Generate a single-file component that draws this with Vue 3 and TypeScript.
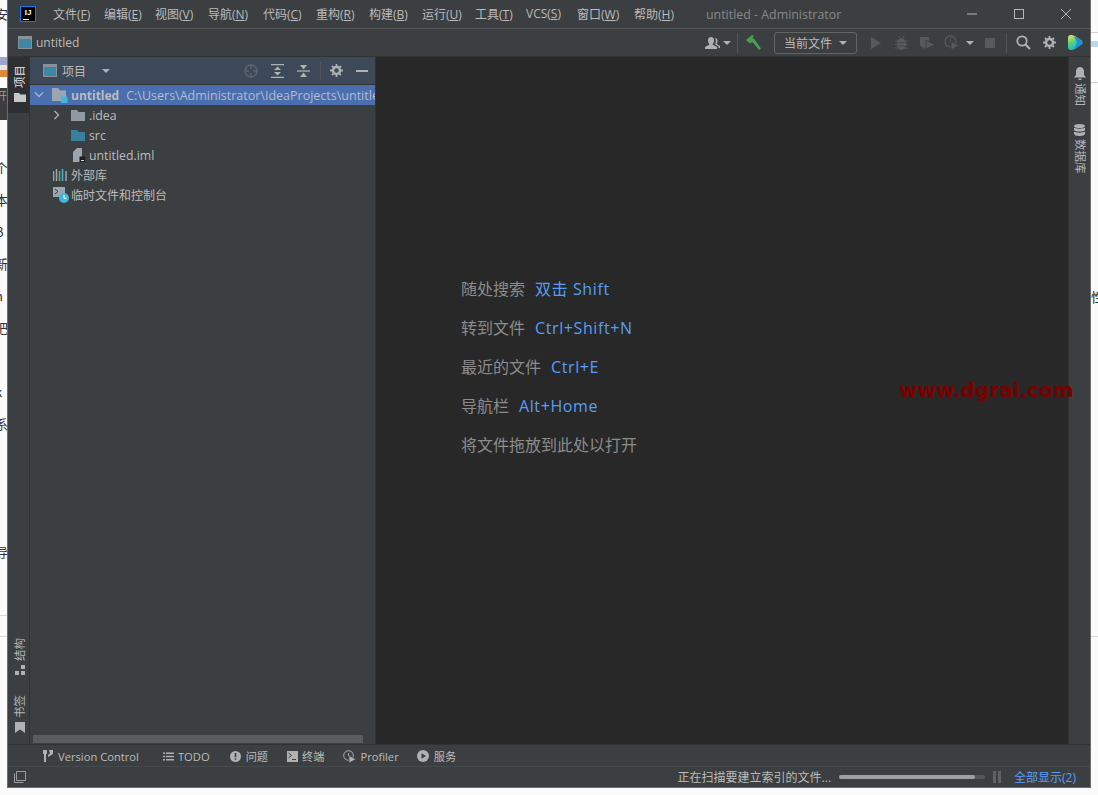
<script setup lang="ts">
// 菜单项的间距不一样，每项单独给宽度
const menus = [
  { name: '文件', key: 'F', width: 51 }, { name: '编辑', key: 'E', width: 51 }, { name: '视图', key: 'V', width: 53 },
  { name: '导航', key: 'N', width: 55 }, { name: '代码', key: 'C', width: 53 }, { name: '重构', key: 'R', width: 53 },
  { name: '构建', key: 'B', width: 53 }, { name: '运行', key: 'U', width: 53 }, { name: '工具', key: 'T', width: 51 },
  { name: 'VCS', key: 'S', width: 51 }, { name: '窗口', key: 'W', width: 57 }, { name: '帮助', key: 'H', width: 41 },
]

// 窗口后面露出来的网页文字
const leftScraps = [
  { text: '安', top: 6 }, { text: '个', top: 160 }, { text: '本', top: 192 }, { text: 'B', top: 224 },
  { text: '新', top: 256 }, { text: 'n', top: 288 }, { text: '把', top: 320 }, { text: 'k', top: 384 },
  { text: '系', top: 416 }, { text: '导', top: 544 },
]

const hints = [
  { label: '随处搜索', keys: '双击 Shift' },
  { label: '转到文件', keys: 'Ctrl+Shift+N' },
  { label: '最近的文件', keys: 'Ctrl+E' },
  { label: '导航栏', keys: 'Alt+Home' },
  { label: '将文件拖放到此处以打开', keys: '' },
]
</script>

<template>
  <div class="page">
    <div class="backdrop">
      <span
        v-for="s in leftScraps"
        :key="s.top"
        class="scrap"
        :style="{ top: s.top + 'px' }"
      >{{ s.text }}</span>
      <i class="band-img" />
      <i class="band-dark"><b>开</b></i>
      <i class="rule rule-a" />
      <i class="rule rule-b" />
      <i class="rule rule-r" />
      <i class="right-top" />
      <span class="scrap-r">性</span>
    </div>

    <div class="window">
      <!-- 标题栏 -->
      <header class="titlebar">
        <div class="logo"><span>IJ</span><i /></div>
        <nav class="menus">
          <span
            v-for="m in menus"
            :key="m.key"
            class="menu"
            :style="{ width: m.width + 'px' }"
          >{{ m.name }}(<u>{{ m.key }}</u>)</span>
        </nav>
        <span class="title">untitled - Administrator</span>
        <div class="winbtns">
          <svg width="12" height="12" viewBox="0 0 12 12"><path d="M1 6h10" stroke="#b4b6b8" /></svg>
          <svg width="12" height="12" viewBox="0 0 12 12"><rect x="1.5" y="1.5" width="9" height="9" fill="none" stroke="#b4b6b8" /></svg>
          <svg width="12" height="12" viewBox="0 0 12 12"><path d="M1 1l10 10M11 1L1 11" stroke="#b4b6b8" /></svg>
        </div>
      </header>

      <!-- 导航栏 -->
      <div class="navbar">
        <svg class="nav-icon" width="14" height="13" viewBox="0 0 14 13">
          <rect width="14" height="13" fill="#8a9097" />
          <rect x="1" y="3" width="12" height="9" fill="#3f87a6" />
        </svg>
        <span class="crumb">untitled</span>
        <div class="tools">
          <svg class="t-user" width="17" height="12" viewBox="0 0 17 12">
            <path d="M6 0c2 0 3 1.500 3 3.500S8 7 7.500 7.500L12 10v2H0v-2l4.500-2.500C4 7 3 5.500 3 3.500S4 0 6 0z" fill="#afb1b3" />
            <path d="M10 1c2 0 2.500 1.500 2.500 3S12 6.500 11.500 7l3.500 2v2h-1.500v-1.500L10 7.500c.5-1 .8-2 .8-4 0-1-.4-2-.8-2.500z" fill="#afb1b3" />
          </svg>
          <i class="caret t-caret1" />
          <i class="sep t-sep1" />
          <svg class="t-hammer" width="16" height="16" viewBox="0 0 16 16">
            <path d="M0 5l6-5 2 1-1.500 1.500L9 5l6 8.500-2 1.500L6.500 7 4 8.500z" fill="#499c54" />
          </svg>
          <div class="run-select">当前文件<i class="caret" /></div>
          <svg class="t-run" width="10" height="12" viewBox="0 0 10 12"><path d="M0 0l10 6-10 6z" fill="#565a5c" /></svg>
          <svg class="t-bug" width="13" height="14" viewBox="0 0 13 14">
            <path d="M0 5h13M0 8.500h13M0 12h13M4 0l1.500 2.500M9 0L7.500 2.500" stroke="#565a5c" />
            <ellipse cx="6.500" cy="8" rx="4.500" ry="6" fill="#565a5c" />
            <path d="M3.500 6.500h6M3.500 10h6" stroke="#3c3f41" stroke-width=".7" />
          </svg>
          <svg class="t-cover" width="15" height="14" viewBox="0 0 15 14">
            <path d="M0 1h9v5L5 13 0 9.500z" fill="#565a5c" />
            <path d="M6 4v9l9-4.500z" fill="#565a5c" stroke="#3c3f41" />
          </svg>
          <svg class="t-prof" width="15" height="15" viewBox="0 0 15 15">
            <circle cx="6.500" cy="6.500" r="5.500" fill="none" stroke="#565a5c" stroke-width="1.300" />
            <path d="M6.500 3v4h2" fill="none" stroke="#565a5c" />
            <path d="M7 6v9l8-4.500z" fill="#565a5c" stroke="#3c3f41" />
          </svg>
          <i class="caret t-caret2" />
          <i class="stop" />
          <i class="sep t-sep2" />
          <svg class="t-search" width="15" height="15" viewBox="0 0 15 15">
            <circle cx="6" cy="6" r="4.700" fill="none" stroke="#afb1b3" stroke-width="1.800" />
            <path d="M9.500 9.500L14 14" stroke="#afb1b3" stroke-width="2.200" />
          </svg>
          <svg class="t-gear" width="13" height="13" viewBox="0 0 13 13">
            <circle cx="6.500" cy="6.500" r="3.500" fill="none" stroke="#afb1b3" stroke-width="2.400" />
            <path d="M6.500 0v2.500M6.500 10.500V13M0 6.500h2.500M10.500 6.500H13M2 2l1.700 1.700M9.300 9.300L11 11M11 2L9.300 3.700M3.700 9.300L2 11" stroke="#afb1b3" stroke-width="1.800" />
          </svg>
          <svg class="t-toolbox" width="15" height="15" viewBox="0 0 15 15">
            <defs>
              <linearGradient id="tb" x1="0" y1="0" x2="0.400" y2="1">
                <stop offset="0" stop-color="#f2e34c" />
                <stop offset="0.550" stop-color="#4fd07f" />
                <stop offset="1" stop-color="#1fb6d8" />
              </linearGradient>
            </defs>
            <path d="M3 0q2 0 4 1l6.500 4.500q2 2 0 4L7 14q-2 1-4 1-3 0-3-3V3q0-3 3-3z" fill="url(#tb)" />
            <path d="M6 1l7.500 4.500q2 2 0 4L6 14l3-6.500z" fill="#1f8fe0" />
          </svg>
        </div>
      </div>

      <!-- 主体 -->
      <div class="main">
        <aside class="stripe stripe-left">
          <div class="stripe-active">
            <span class="vtext up light">项目</span>
            <svg class="stripe-folder" width="12" height="9" viewBox="0 0 12 9"><path d="M0 0h5l1.500 1.500H12V9H0z" fill="#c4c6c8" /></svg>
          </div>
          <div class="stripe-bottom">
            <span class="vtext up">结构</span>
            <svg width="10" height="10" viewBox="0 0 10 10"><path d="M6 0h4v4H6zM0 6h4v4H0zM6 6h4v4H6z" fill="#afb1b3" /></svg>
            <span class="vtext up bm-label">书签</span>
            <svg width="10" height="11" viewBox="0 0 10 11"><path d="M0 0h10v11L5 7.500 0 11z" fill="#afb1b3" /></svg>
          </div>
        </aside>

        <section class="project">
          <div class="project-head">
            <svg width="14" height="13" viewBox="0 0 14 13">
              <rect width="14" height="13" fill="#8a9097" />
              <rect x="1" y="3" width="12" height="9" fill="#3f87a6" />
            </svg>
            <span class="project-title">项目</span>
            <i class="caret head-caret" />
            <div class="head-tools">
              <svg width="14" height="14" viewBox="0 0 14 14">
                <circle cx="7" cy="7" r="6" fill="none" stroke="#5f6468" stroke-width="1.500" />
                <path d="M7 0v5M7 9v5M0 7h5M9 7h5" stroke="#5f6468" stroke-width="1.500" />
              </svg>
              <svg width="13" height="14" viewBox="0 0 13 14">
                <path d="M0 .5h13M0 13.500h13" stroke="#afb1b3" stroke-width="1.300" />
                <path d="M6.500 2.500L10 6H3zM6.500 11.500L3 8h7z" fill="#afb1b3" />
              </svg>
              <svg width="13" height="14" viewBox="0 0 13 14">
                <path d="M0 7h13" stroke="#afb1b3" stroke-width="1.300" />
                <path d="M6.500 5.500L3 1h7zM6.500 8.500L10 13H3z" fill="#afb1b3" />
              </svg>
              <i class="sep head-sep" />
              <svg width="13" height="13" viewBox="0 0 13 13">
                <circle cx="6.500" cy="6.500" r="3.500" fill="none" stroke="#afb1b3" stroke-width="2.400" />
                <path d="M6.500 0v2.500M6.500 10.500V13M0 6.500h2.500M10.500 6.500H13M2 2l1.700 1.700M9.300 9.300L11 11M11 2L9.300 3.700M3.700 9.300L2 11" stroke="#afb1b3" stroke-width="1.800" />
              </svg>
              <svg width="12" height="2" viewBox="0 0 12 2"><path d="M0 1h12" stroke="#afb1b3" stroke-width="2" /></svg>
            </div>
          </div>

          <div class="tree">
            <div class="row row-selected">
              <svg class="arrow" width="10" height="6" viewBox="0 0 10 6"><path d="M1 .5l4 4 4-4" fill="none" stroke="#aab8d0" stroke-width="1.300" /></svg>
              <svg class="ico" width="16" height="15" viewBox="0 0 16 15">
                <path d="M0 0h6l2 2.500h6V13H0z" fill="#9aa7b0" />
                <rect x="9" y="8.500" width="6.500" height="6.500" fill="#40b6e0" />
              </svg>
              <span class="name-bold">untitled</span>
              <span class="path">C:\Users\Administrator\IdeaProjects\untitled</span>
            </div>
            <div class="row lvl1">
              <svg class="arrow-right" width="6" height="10" viewBox="0 0 6 10"><path d="M.5 1l4 4-4 4" fill="none" stroke="#afb1b3" stroke-width="1.300" /></svg>
              <svg class="ico1" width="14" height="11" viewBox="0 0 14 11"><path d="M0 0h6l1.500 2H14v9H0z" fill="#8f9ba4" /></svg>
              <span>.idea</span>
            </div>
            <div class="row lvl1 no-arrow">
              <svg class="ico1" width="14" height="11" viewBox="0 0 14 11"><path d="M0 0h6l1.500 2H14v9H0z" fill="#3a7f9e" /></svg>
              <span>src</span>
            </div>
            <div class="row lvl1 no-arrow">
              <svg class="ico1 ico-iml" width="12" height="14" viewBox="0 0 12 14">
                <path d="M0 4l4-4h5v14H0z" fill="#9aa7b0" />
                <rect x="6.500" y="8.500" width="5.500" height="5.500" fill="#1c1c1c" />
                <path d="M8 12.500h3" stroke="#ddd" />
              </svg>
              <span>untitled.iml</span>
            </div>
            <div class="row lvl0">
              <svg class="ico0" width="15" height="12" viewBox="0 0 15 12">
                <path d="M.5 2v10M3.500 0v12" stroke="#9aa7b0" stroke-width="1.500" />
                <path d="M6.500 2v10" stroke="#62b543" stroke-width="1.500" />
                <path d="M9.500 0v12" stroke="#40b6e0" stroke-width="1.500" />
                <path d="M13 2v10" stroke="#9aa7b0" stroke-width="1.500" />
              </svg>
              <span>外部库</span>
            </div>
            <div class="row lvl0">
              <svg class="ico0 ico-temp" width="16" height="16" viewBox="0 0 16 16">
                <rect x="0" y="0" width="12" height="10" fill="#9aa7b0" />
                <path d="M2 2l3 2.500L2 7" fill="none" stroke="#3c3f41" />
                <circle cx="11" cy="11" r="5" fill="#40b6e0" />
                <path d="M11 8v3.300h2.500" fill="none" stroke="#fff" />
              </svg>
              <span>临时文件和控制台</span>
            </div>
          </div>

          <div class="hscroll"><i /></div>
        </section>

        <section class="editor">
          <p v-for="h in hints" :key="h.label" class="hint">
            <span>{{ h.label }}</span>
            <span v-if="h.keys" class="keys">{{ h.keys }}</span>
          </p>
        </section>

        <aside class="stripe stripe-right">
          <svg class="bell" width="12" height="13" viewBox="0 0 12 13">
            <path d="M6 0c2.500 0 4 2 4 4.500V8l2 2.500H0L2 8V4.500C2 2 3.500 0 6 0z" fill="#afb1b3" />
            <path d="M4.500 11.500h3v1.500h-3z" fill="#afb1b3" />
          </svg>
          <span class="vtext down">通知</span>
          <svg class="db" width="11" height="12" viewBox="0 0 11 12">
            <ellipse cx="5.500" cy="2" rx="5.500" ry="2" fill="#afb1b3" />
            <path d="M0 3.500c1 1.500 10 1.500 11 0V6c-1 2-10 2-11 0zM0 7.500c1 1.500 10 1.500 11 0V10c-1 2.700-10 2.700-11 0z" fill="#afb1b3" />
          </svg>
          <span class="vtext down">数据库</span>
        </aside>

        <span class="watermark">www.dgrai.com</span>
      </div>

      <!-- 底部工具窗口条 -->
      <div class="toolbar-bottom">
        <span class="tw tw-vc">
          <svg width="10" height="12" viewBox="0 0 10 12">
            <path d="M0 0h4v4H3v8H1V4H0zM6 0h4v4L5 7V5l2-1.500z" fill="#afb1b3" />
          </svg>Version Control
        </span>
        <span class="tw tw-todo">
          <svg width="11" height="9" viewBox="0 0 11 9">
            <path d="M0 .5h2v1.500H0zM3 .5h8v1.500H3zM0 3.800h2v1.500H0zM3 3.800h8v1.500H3zM0 7h2v1.500H0zM3 7h8v1.500H3z" fill="#afb1b3" />
          </svg>TODO
        </span>
        <span class="tw tw-issue">
          <svg width="11" height="11" viewBox="0 0 11 11">
            <circle cx="5.500" cy="5.500" r="5.500" fill="#afb1b3" />
            <path d="M4.700 2h1.600v4.300H4.700zM4.700 7.300h1.600v1.500H4.700z" fill="#3c3f41" />
          </svg>问题
        </span>
        <span class="tw tw-term">
          <svg width="11" height="11" viewBox="0 0 11 11">
            <rect width="11" height="11" fill="#afb1b3" />
            <path d="M1.500 2l3 2.500-3 2.500M5 8.500h4" fill="none" stroke="#3c3f41" />
          </svg>终端
        </span>
        <span class="tw tw-prof">
          <svg width="13" height="13" viewBox="0 0 13 13">
            <circle cx="5.500" cy="5.500" r="4.800" fill="none" stroke="#afb1b3" />
            <path d="M5.500 3v3h2" fill="none" stroke="#afb1b3" />
            <path d="M6 5.500v7.500l7-3.700z" fill="#afb1b3" stroke="#3c3f41" stroke-width=".7" />
          </svg>Profiler
        </span>
        <span class="tw tw-serv">
          <svg width="12" height="12" viewBox="0 0 12 12">
            <circle cx="6" cy="6" r="6" fill="#afb1b3" />
            <path d="M4.500 3.200v5.600L9 6z" fill="#3c3f41" />
          </svg>服务
        </span>
      </div>

      <!-- 状态栏 -->
      <footer class="statusbar">
        <svg class="status-sq" width="12" height="12" viewBox="0 0 12 12">
          <path d="M2.500.5h9v9h-9z" fill="none" stroke="#9a9c9e" />
          <path d="M.5 2.500v9h9" fill="none" stroke="#9a9c9e" />
        </svg>
        <span class="scan">正在扫描要建立索引的文件...</span>
        <div class="progress"><i :style="{ width: '93%' }" /></div>
        <i class="pause" />
        <span class="show-all">全部显示(2)</span>
      </footer>
    </div>
  </div>
</template>

<style scoped>
.page {
  position: relative;
  width: 1098px;
  height: 795px;
  overflow: hidden;
  background: #fbfbfb;
  font-family: 'Open Sans', 'Noto Sans CJK SC', sans-serif;
}

.backdrop i {
  display: block;
}
.scrap {
  position: absolute;
  left: -5px;
  font: 13px/16px 'Noto Sans CJK SC', sans-serif;
  color: #2e2e3c;
}
.band-img {
  position: absolute;
  left: 0;
  top: 57px;
  width: 8px;
  height: 22px;
  background: linear-gradient(#9ba6c8 0 8px, #e9e4e0 8px 13px, #d98a3a 13px 20px, #fbfbfb 20px);
}
.band-dark {
  position: absolute;
  left: 0;
  top: 88px;
  width: 8px;
  height: 32px;
  background: #3b3d3f;
}
.band-dark b {
  position: absolute;
  left: -4px;
  top: 0;
  font: 11px/14px 'Noto Sans CJK SC', sans-serif;
  color: #9a9a9a;
}
.rule {
  position: absolute;
  height: 1px;
  background: #d8d8d8;
}
.rule-a {
  left: 0;
  top: 615px;
  width: 8px;
}
.rule-b {
  left: 0;
  top: 636px;
  width: 8px;
}
.rule-r {
  left: 1090px;
  top: 636px;
  width: 8px;
}
.right-top {
  position: absolute;
  left: 1090px;
  top: 32px;
  width: 8px;
  height: 49px;
  border-top: 1px solid #d0d0d0;
  border-bottom: 1px solid #d0d0d0;
  background: linear-gradient(#fff 0 8px, #bcd8f0 8px 14px, #fff 14px);
}
.scrap-r {
  position: absolute;
  left: 1091px;
  top: 289px;
  font: 13px/16px 'Noto Sans CJK SC', sans-serif;
  color: #222;
}

.window {
  position: relative;
  display: flex;
  flex-direction: column;
  width: 1084px;
  height: 788px;
  margin-left: 7px;
  border-left: 1px solid #6b6d6f;
  border-right: 1px solid #6b6d6f;
  border-bottom: 1px solid #6b6d6f;
  box-sizing: border-box;
  background: #3c3f41;
  color: #bbbbbb;
  font-size: 12px;
}

.titlebar {
  display: flex;
  align-items: center;
  flex: none;
  height: 29px;
  border-bottom: 1px solid #535557;
  box-sizing: border-box;
}
.logo {
  position: relative;
  flex: none;
  width: 16px;
  height: 16px;
  margin-left: 12px;
  box-sizing: border-box;
  background: #000;
  border: 1px solid #0d7bf2;
  color: #fff;
  font: 700 8px/9px 'Liberation Sans', sans-serif;
  text-align: center;
}
.logo span {
  display: block;
  margin-top: 1px;
}
.logo i {
  position: absolute;
  left: 2px;
  bottom: 1px;
  width: 6px;
  height: 1px;
  background: #fff;
}
.menus {
  display: flex;
  margin-left: 17px;
}
.menu {
  flex: none;
  color: #bbbbbb;
  font-size: 12px;
  white-space: nowrap;
}
.title {
  position: absolute;
  left: 698px;
  top: 6px;
  color: #85888a;
  font-size: 12.400px;
  white-space: nowrap;
}
.winbtns {
  display: flex;
  gap: 35px;
  margin-left: auto;
  margin-right: 18px;
}

.navbar {
  display: flex;
  align-items: center;
  flex: none;
  height: 28px;
  border-bottom: 1px solid #323232;
  box-sizing: border-box;
}
.nav-icon {
  margin-left: 10px;
}
.crumb {
  margin-left: 4px;
  font-size: 12px;
}
.tools {
  display: flex;
  align-items: center;
  margin-left: auto;
  padding-right: 7px;
}
.caret {
  display: inline-block;
  width: 0;
  height: 0;
  border-left: 4px solid transparent;
  border-right: 4px solid transparent;
  border-top: 4px solid #afb1b3;
}
.sep {
  display: block;
  width: 1px;
  height: 20px;
  background: #515355;
}
.t-caret1 {
  margin-left: 1px;
}
.t-sep1 {
  margin-left: 6px;
}
.t-hammer {
  margin-left: 8px;
}
.run-select {
  display: flex;
  align-items: center;
  justify-content: space-between;
  width: 83px;
  height: 22px;
  margin-left: 12px;
  padding: 0 9px;
  box-sizing: border-box;
  border: 1px solid #646464;
  border-radius: 3px;
  color: #bbbbbb;
}
.t-run {
  margin-left: 14px;
}
.t-bug {
  margin-left: 14px;
}
.t-cover {
  margin-left: 12px;
}
.t-prof {
  margin-left: 9px;
}
.t-caret2 {
  margin-left: 7px;
}
.stop {
  display: block;
  width: 10px;
  height: 10px;
  margin-left: 11px;
  background: #565a5c;
}
.t-sep2 {
  margin-left: 11px;
}
.t-search {
  margin-left: 9px;
}
.t-gear {
  margin-left: 12px;
}
.t-toolbox {
  margin-left: 12px;
}

.main {
  position: relative;
  display: flex;
  flex: 1;
  min-height: 0;
}
.stripe {
  flex: none;
  display: flex;
  flex-direction: column;
  align-items: center;
  width: 22px;
  box-sizing: border-box;
}
.stripe-left {
  border-right: 1px solid #323232;
  justify-content: space-between;
}
.stripe-right {
  border-left: 1px solid #323232;
  padding-top: 10px;
  background: #3c3f41;
}
.stripe-active {
  display: flex;
  flex-direction: column;
  align-items: center;
  width: 100%;
  height: 56px;
  padding: 8px 0 0 2px;
  box-sizing: border-box;
  background: #2d2f30;
}
.stripe-folder {
  margin-top: 5px;
}
.stripe-bottom {
  display: flex;
  flex-direction: column;
  align-items: center;
  padding: 0 0 11px 2px;
}
.stripe-bottom svg {
  margin-top: 4px;
}
.bm-label {
  margin-top: 20px;
}
.vtext {
  writing-mode: vertical-rl;
  text-orientation: sideways;
  font-size: 11.500px;
  line-height: 14px;
  color: #b4b6b8;
}
.vtext.up {
  transform: rotate(180deg);
}
.vtext.light {
  color: #e0e0e0;
}
.bell {
  margin-bottom: 3px;
}
.db {
  margin-top: 18px;
  margin-bottom: 3px;
}

.project {
  flex: none;
  display: flex;
  flex-direction: column;
  width: 346px;
  border-right: 1px solid #323232;
  box-sizing: border-box;
}
.project-head {
  display: flex;
  align-items: center;
  flex: none;
  height: 28px;
  padding: 0 7px 0 13px;
  box-sizing: border-box;
  background: #3d4858;
  border-bottom: 1px solid #323232;
}
.project-title {
  margin-left: 5px;
}
.head-caret {
  margin-left: 16px;
}
.head-tools {
  display: flex;
  align-items: center;
  gap: 13px;
  margin-left: auto;
}
.head-sep {
  height: 18px;
  margin: 0 -4px 0 -3px;
}
.tree {
  flex: 1;
  min-height: 0;
  overflow: hidden;
}
.row {
  display: flex;
  align-items: center;
  height: 20px;
  white-space: nowrap;
  overflow: hidden;
  font-size: 12.300px;
}
.row-selected {
  background: #4b6eaf;
  color: #bbbbbb;
}
.arrow {
  flex: none;
  margin-left: 4px;
}
.ico {
  flex: none;
  margin-left: 8px;
}
.name-bold {
  margin-left: 3px;
  font-weight: 700;
  font-size: 12px;
}
.path {
  margin-left: 7px;
  color: #b3bccc;
  font-size: 12.500px;
}
.lvl1 .arrow-right {
  flex: none;
  margin-left: 24px;
  margin-right: 11px;
}
.no-arrow {
  padding-left: 41px;
}
.ico1 {
  flex: none;
  margin-right: 4px;
}
.ico-iml {
  margin-left: 2px;
}
.lvl0 {
  padding-left: 23px;
  font-size: 12px;
}
.ico0 {
  flex: none;
  margin-right: 3px;
}
.ico-temp {
  margin-right: 2px;
}
.hscroll {
  flex: none;
  height: 9px;
  padding: 0 12px 1px 3px;
  box-sizing: border-box;
}
.hscroll i {
  display: block;
  height: 8px;
  background: #595b5d;
}

.editor {
  flex: 1;
  min-width: 0;
  padding: 221px 0 0 85px;
  box-sizing: border-box;
  background: #282828;
}
.hint {
  display: flex;
  gap: 10px;
  height: 23px;
  margin: 0 0 16px;
  color: #8c8c8c;
  font-size: 16px;
  line-height: 23px;
  white-space: nowrap;
}
.keys {
  color: #589df6;
  letter-spacing: 0.600px;
}
.watermark {
  position: absolute;
  left: 891px;
  top: 320px;
  color: #7a0000;
  font: 700 20px/26px 'DejaVu Sans', sans-serif;
  white-space: nowrap;
}

.toolbar-bottom {
  position: relative;
  display: flex;
  align-items: center;
  flex: none;
  height: 23px;
  padding-top: 1px;
  border-top: 1px solid #323232;
  border-bottom: 1px solid #474a4c;
  box-sizing: border-box;
}
.tw {
  display: flex;
  align-items: center;
  white-space: nowrap;
  font-size: 11.200px;
}
.tw svg {
  margin-right: 5px;
}
.tw-vc {
  margin-left: 35px;
}
.tw-todo {
  margin-left: 24px;
}
.tw-todo svg,
.tw-term svg,
.tw-prof svg {
  margin-right: 4px;
}
.tw-issue {
  margin-left: 20px;
}
.tw-term {
  margin-left: 19px;
}
.tw-prof {
  margin-left: 19px;
}
.tw-serv {
  margin-left: 18px;
}

.statusbar {
  display: flex;
  align-items: center;
  flex: none;
  height: 20px;
}
.status-sq {
  margin-left: 6px;
}
.scan {
  margin-left: auto;
  color: #bbbbbb;
  white-space: nowrap;
}
.progress {
  flex: none;
  width: 146px;
  height: 4px;
  margin-left: 8px;
  border-radius: 2px;
  background: #555759;
}
.progress i {
  display: block;
  height: 100%;
  border-radius: 2px;
  background: #a0a0a0;
}
.pause {
  flex: none;
  width: 3px;
  height: 12px;
  margin-left: 8px;
  background: #5f6264;
  box-shadow: 5px 0 0 #5f6264;
}
.show-all {
  margin-left: 18px;
  margin-right: 14px;
  color: #589df6;
  white-space: nowrap;
}
</style>
